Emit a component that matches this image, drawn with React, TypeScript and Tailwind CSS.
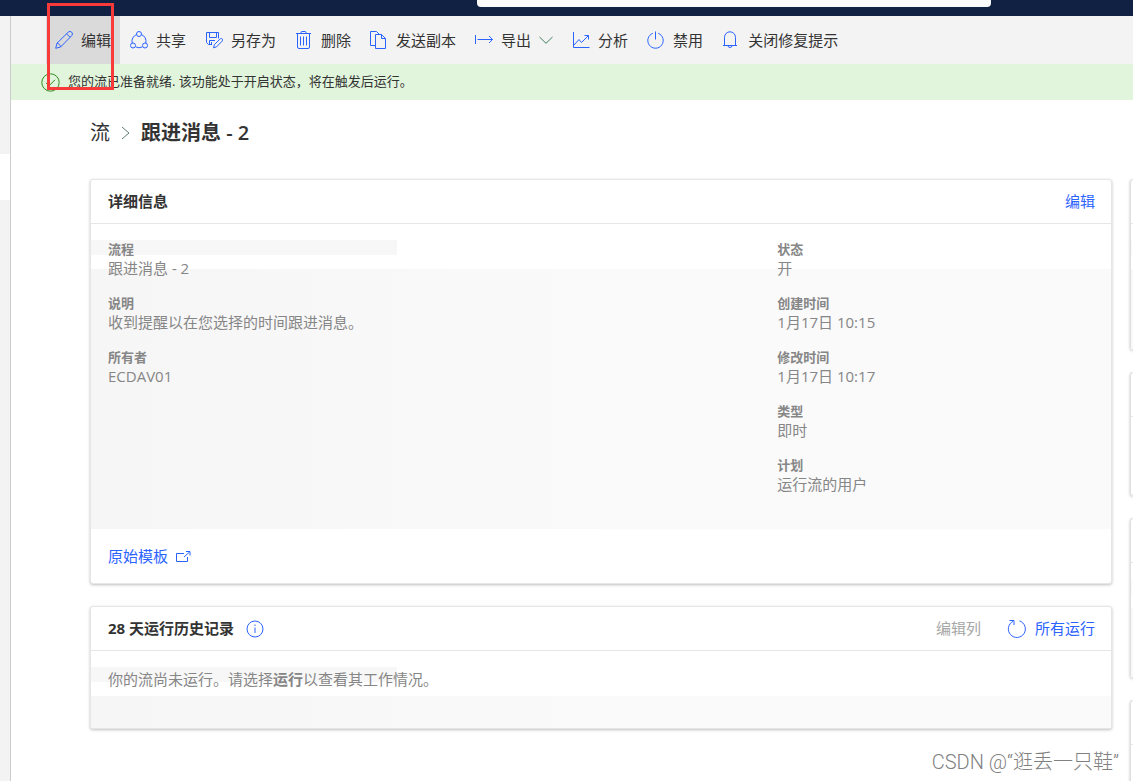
import type { ReactNode } from 'react'

const Svg = ({ children, w = 18, h = 18 }: { children: ReactNode; w?: number; h?: number }) => (
  <svg width={w} height={h} viewBox={`0 0 ${w} ${h}`} fill="none" stroke="currentColor" className="shrink-0" aria-hidden="true">
    {children}
  </svg>
)

const EditIcon = () => (
  <Svg>
    <path d="M.7 17.3 2 12.2 13.2 1.2a2.4 2.4 0 0 1 3.5 3.5L5.7 15.9.7 17.3ZM2 12.2c1.8.3 3.3 1.8 3.7 3.7M11.6 2.800l3.600 3.600" />
  </Svg>
)

const ShareIcon = () => (
  <Svg>
    <circle cx="9" cy="3" r="2.5" />
    <circle cx="3" cy="14.5" r="2.5" />
    <circle cx="15" cy="14.5" r="2.5" />
    <path d="M6.6 3.600A7 7 0 0 0 2.200 12M11.400 3.600A7 7 0 0 1 15.800 12M5.700 15.900a7 7 0 0 0 6.600 0" />
  </Svg>
)

const SaveAsIcon = () => (
  <Svg>
    <path d="M7 13.500H3.500l-2-2v-10h12v6M4.500 1.500v5h7v-5M4.500 13.500v-4H10M6.500 11v2.500M8.500 16.800l.9-3.200 5.900-5.800a1.500 1.500 0 0 1 2.100 2.100l-5.800 5.900-3.100 1Z" />
  </Svg>
)

const DeleteIcon = () => (
  <Svg>
    <path d="M1 2.500h15M6 2.500v-1q0-1 1-1h3q1 0 1 1v1M2.500 2.500v13.500q0 1.500 1.500 1.500h9q1.500 0 1.500-1.500V2.500M5.500 5.500v9M8.500 5.500v9M11.500 5.500v9" />
  </Svg>
)

const CopyIcon = () => (
  <Svg>
    <path d="M5.500 14.500h-5V.5h6l3 3M5.500 3.500h6l4 4v10h-10v-14ZM11.500 3.500v4h4" />
  </Svg>
)

const ExportIcon = () => (
  <Svg>
    <path d="M.5 4v9M2.500 8.500h15M14 5l3.500 3.500L14 12" />
  </Svg>
)

const AnalyticsIcon = () => (
  <Svg>
    <path d="M1.500 1v15.500h16M2 14l5-5.500 2.500 3 7-7M12.500 4.500h4v4" />
  </Svg>
)

const PowerIcon = () => (
  <Svg>
    <path d="M8.500 .5v8M5.800 2.300a7.700 7.700 0 1 0 5.400 0" />
  </Svg>
)

const BellIcon = () => (
  <Svg>
    <path d="M1 14.500h14M2.500 14.500V6.300a5.500 5.500 0 0 1 11 0v8.200M6 14.500a2 2 0 0 0 4 0" />
  </Svg>
)

const commands = [
  { label: '编辑', icon: <EditIcon />, active: true },
  { label: '共享', icon: <ShareIcon /> },
  { label: '另存为', icon: <SaveAsIcon /> },
  { label: '删除', icon: <DeleteIcon /> },
  { label: '发送副本', icon: <CopyIcon /> },
  { label: '导出', icon: <ExportIcon />, menu: true },
  { label: '分析', icon: <AnalyticsIcon /> },
  { label: '禁用', icon: <PowerIcon /> },
  { label: '关闭修复提示', icon: <BellIcon /> },
]

const leftFields = [
  ['流程', '跟进消息 - 2'],
  ['说明', '收到提醒以在您选择的时间跟进消息。'],
  ['所有者', 'ECDAV01'],
]

const rightFields = [
  ['状态', '开'],
  ['创建时间', '1月17日 10:15'],
  ['修改时间', '1月17日 10:17'],
  ['类型', '即时'],
  ['计划', '运行流的用户'],
]

// loading placeholder that sits behind a card's content
const Shimmer = () => (
  <div className="absolute inset-0 flex flex-col gap-[14px] overflow-hidden pt-4">
    <div className="h-[15px] w-[30%] shrink-0 bg-[#f7f7f7]" />
    <div className="flex-1 bg-linear-to-r from-[#f6f6f6] to-[#fafafa] to-50%" />
  </div>
)

const Fields = ({ items }: { items: string[][] }) => (
  <dl className="flex flex-col gap-[15px]">
    {items.map(([label, value]) => (
      <div key={label}>
        <dt className="text-[13px] leading-[18px] font-bold">{label}</dt>
        <dd className="text-[15px] leading-[21px]">{value}</dd>
      </div>
    ))}
  </dl>
)

const Card = ({ header, children }: { header: ReactNode; children: ReactNode }) => (
  <section className="rounded-[3px] border border-[#e6e6e6] bg-white shadow-[0_1px_3px_rgba(0,0,0,0.25)]">
    <header className="flex h-11 items-center border-b border-[#e6e6e6] pr-4 pl-[17px]">{header}</header>
    {children}
  </section>
)

const SideCard = ({ className, loading }: { className: string; loading?: boolean }) => (
  <section className={`flex flex-col rounded-l-[3px] border border-r-0 border-[#e0e0e0] shadow-[0_1px_3px_rgba(0,0,0,0.25)] ${className}`}>
    <div className="h-11 shrink-0 border-b border-[#e6e6e6]" />
    <div className="relative flex-1">{loading && <Shimmer />}</div>
  </section>
)

export default function App() {
  return (
    <div className="relative flex h-screen flex-col overflow-hidden bg-white font-['Open_Sans','Noto_Sans_CJK_SC',sans-serif] text-[15px] text-[#333]" lang="zh-CN">
      <div className="flex h-4 shrink-0 items-start bg-[#102144] pr-[142px] pl-[477px]">
        <input type="search" aria-label="搜索" className="h-[7px] w-full rounded-b-[4px] bg-[#fafafa] outline-none" />
      </div>

      <div className="flex min-h-0 flex-1">
        <nav className="flex w-[11px] shrink-0 flex-col border-r border-[#ccc] bg-[#f3f3f3] pt-[138px]">
          <div className="h-[46px] bg-white" />
        </nav>

        <main className="flex min-w-0 flex-1 flex-col">
          <div className="flex h-12 shrink-0 gap-px bg-[#f3f3f3] pl-[35px]" role="toolbar">
            {commands.map(c => (
              <button
                key={c.label}
                className={`flex items-center gap-2 px-[9px] whitespace-nowrap ${c.active ? 'bg-[#dadada]' : ''}`}
              >
                <span className="text-[#2b63ff]">{c.icon}</span>
                {c.label}
                {c.menu && (
                  <span className="text-[#3f7d5a]">
                    <Svg w={14} h={8}><path d="m.5 1 6.500 6.300L13.500 1" /></Svg>
                  </span>
                )}
              </button>
            ))}
          </div>

          <div className="flex h-9 shrink-0 items-center gap-2 bg-[#e1f5dc] pl-[30px] text-[13px]" role="status">
            <span className="text-[#2c8a1c]">
              <Svg w={19} h={19}>
                <circle cx="9.500" cy="9.500" r="8.700" />
                <path d="m5 9.800 3 3 6-6" />
              </Svg>
            </span>
            您的流已准备就绪. 该功能处于开启状态，将在触发后运行。
          </div>

          <div className="flex items-center gap-[11px] pt-[19px] pl-[79px] text-[20px] leading-7">
            <a href="#flows">流</a>
            <span className="text-[#5b8070]">
              <Svg w={9} h={14}><path d="m1 1 7 6-7 6" /></Svg>
            </span>
            <h1 className="font-bold">跟进消息 <span className="font-semibold">- 2</span></h1>
          </div>

          <div className="flex gap-[18px] pt-8 pl-[79px]">
            <div className="flex min-w-0 flex-1 flex-col gap-[22px]">
              <Card
                header={
                  <>
                    <h2 className="flex-1 font-bold">详细信息</h2>
                    <a href="#edit" className="text-[#2b63ff]">编辑</a>
                  </>
                }
              >
                <div className="relative h-[305px] text-[#868686]">
                  <Shimmer />
                  <div className="relative grid grid-cols-[2fr_1fr] gap-[34px] pt-4 pr-4 pl-[17px]">
                    <Fields items={leftFields} />
                    <Fields items={rightFields} />
                  </div>
                </div>
                <div className="flex h-[54px] items-center pt-px pl-[17px]">
                  <a href="#template" className="flex items-center gap-2 text-[#2b63ff]">
                    原始模板
                    <Svg w={15} h={12}>
                      <path d="M8 2.500H.5v8h11V6M8 6l5.500-5M10 .5h4v4" />
                    </Svg>
                  </a>
                </div>
              </Card>

              <Card
                header={
                  <>
                    <h2 className="font-bold">28 天运行历史记录</h2>
                    <button aria-label="信息" className="ml-3 text-[#2b63ff]">
                      <Svg>
                        <circle cx="9" cy="9" r="8" />
                        <path d="M9 7.500v5.500M9 4.500v1.500" />
                      </Svg>
                    </button>
                    <div className="flex-1" />
                    <button disabled className="mr-[26px] text-[#a6a6a6]">编辑列</button>
                    <a href="#runs" className="flex items-center gap-2 text-[#2b63ff]">
                      <Svg w={20} h={20}>
                        <path d="M12.500 1.900a8.500 8.500 0 1 1-6.500.5M2.500 1.500h4.500v4.500" />
                      </Svg>
                      所有运行
                    </a>
                  </>
                }
              >
                <div className="relative h-[77px] text-[#868686]">
                  <Shimmer />
                  <p className="relative pt-[17px] pr-4 pl-[17px] leading-[22px]">
                    你的流尚未运行。请选择<b>运行</b>以查看其工作情况。
                  </p>
                </div>
              </Card>
            </div>

            <aside className="flex w-[3px] shrink-0 flex-col gap-[22px]">
              <SideCard className="h-[171px]" loading />
              <SideCard className="h-[124px]" />
              <SideCard className="h-[160px]" loading />
              <SideCard className="h-[160px]" />
            </aside>
          </div>
        </main>
      </div>

      <div className="pointer-events-none absolute top-[3px] left-[47px] h-[87px] w-[67px] border-3 border-[#f93a3a]" />
      <div className="pointer-events-none absolute right-[14px] bottom-1 font-['Roboto','Noto_Sans_CJK_SC',sans-serif] text-[20px] leading-[30px] font-light text-[#808080]">
        CSDN @“逛丢一只鞋”
      </div>
    </div>
  )
}
